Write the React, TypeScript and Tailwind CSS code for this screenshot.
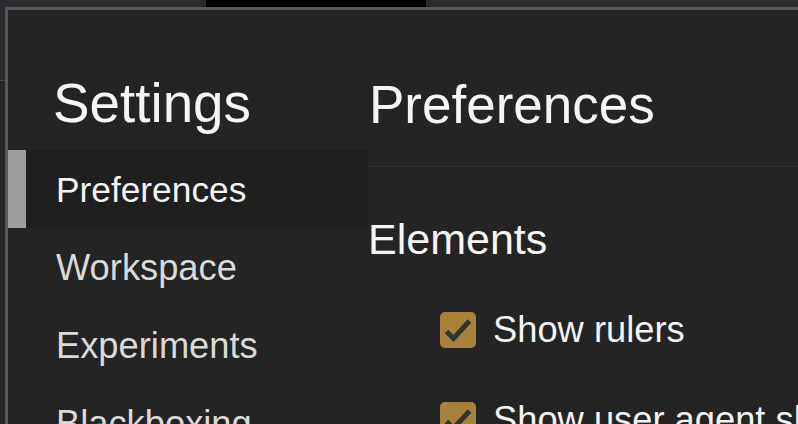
import React from "react";

function Check() {
  return (
    <div className="w-[36px] h-[36px] shrink-0 rounded-[5px] bg-[#a8823a] flex items-center justify-center">
      <svg width="36" height="36" viewBox="0 0 36 36">
        <path d="M6.5 19.5 L13.5 26.5 L29.5 9" fill="none" stroke="#333333" strokeWidth="5" strokeLinecap="butt" strokeLinejoin="miter" />
      </svg>
    </div>
  );
}

export default function App() {
  const items = ["Workspace", "Experiments", "Blackboxing"];
  return (
    <div
      className="w-[798px] h-[424px] overflow-hidden flex bg-[#2a2b2e]"
      style={{ fontFamily: '"Liberation Sans", Arial, sans-serif' }}
    >
      <div className="w-[5px] shrink-0 flex flex-col">
        <div className="h-[80px] bg-[#2a2b2e]" />
        <div className="h-px bg-[#474747]" />
        <div className="flex-1 bg-[#262628]" />
      </div>
      <div className="flex-1 flex flex-col min-w-0">
        <div className="h-[7px] shrink-0 flex">
          <div className="w-[201px] bg-[#2a2b2e]" />
          <div className="w-[220px] bg-black" />
          <div className="flex-1 bg-[#2a2b2f]" />
        </div>
        <div className="flex-1 flex border-t-[3px] border-l-[3px] border-[#575757] bg-[#242424] min-h-0">
          <div className="w-[360px] shrink-0 flex flex-col">
            <div className="h-[140px] shrink-0 pt-[66px] pl-[45px] text-[54.8px] leading-none text-[#f5f5f7]">
              Settings
            </div>
            <div className="h-[78px] shrink-0 flex">
              <div className="w-[18px] bg-[#9e9e9e]" />
              <div className="flex-1 bg-[#1f1f1f] flex items-center pt-[2px] pl-[30px] text-[35.3px] leading-none text-[#f3f3f5]">
                Preferences
              </div>
            </div>
            {items.map((t) => (
              <div
                key={t}
                className="h-[78px] shrink-0 flex items-center pt-[2px] pl-[48px] text-[36.3px] leading-none text-[#dadada]"
              >
                {t}
              </div>
            ))}
          </div>
          <div className="flex-1 flex flex-col min-w-0">
            <div className="h-[157px] shrink-0 border-b border-[#2e2e2e] pt-[68px] pl-[1px] text-[53px] leading-none text-[#f5f5f7] whitespace-nowrap">
              Preferences
            </div>
            <div className="pt-[51px] text-[43px] leading-none text-[#f5f5f7]">
              Elements
            </div>
            <div className="pt-[51px] pl-[72px] flex flex-col gap-[54px]">
              <div className="h-[36px] flex items-center gap-[17px]">
                <Check />
                <span className="text-[36.3px] leading-none text-[#f3f3f5] whitespace-nowrap">Show rulers</span>
              </div>
              <div className="h-[36px] flex items-center gap-[17px]">
                <Check />
                <span className="text-[36.3px] leading-none text-[#f3f3f5] whitespace-nowrap">Show user agent shadow DOM</span>
              </div>
            </div>
          </div>
        </div>
      </div>
    </div>
  );
}
